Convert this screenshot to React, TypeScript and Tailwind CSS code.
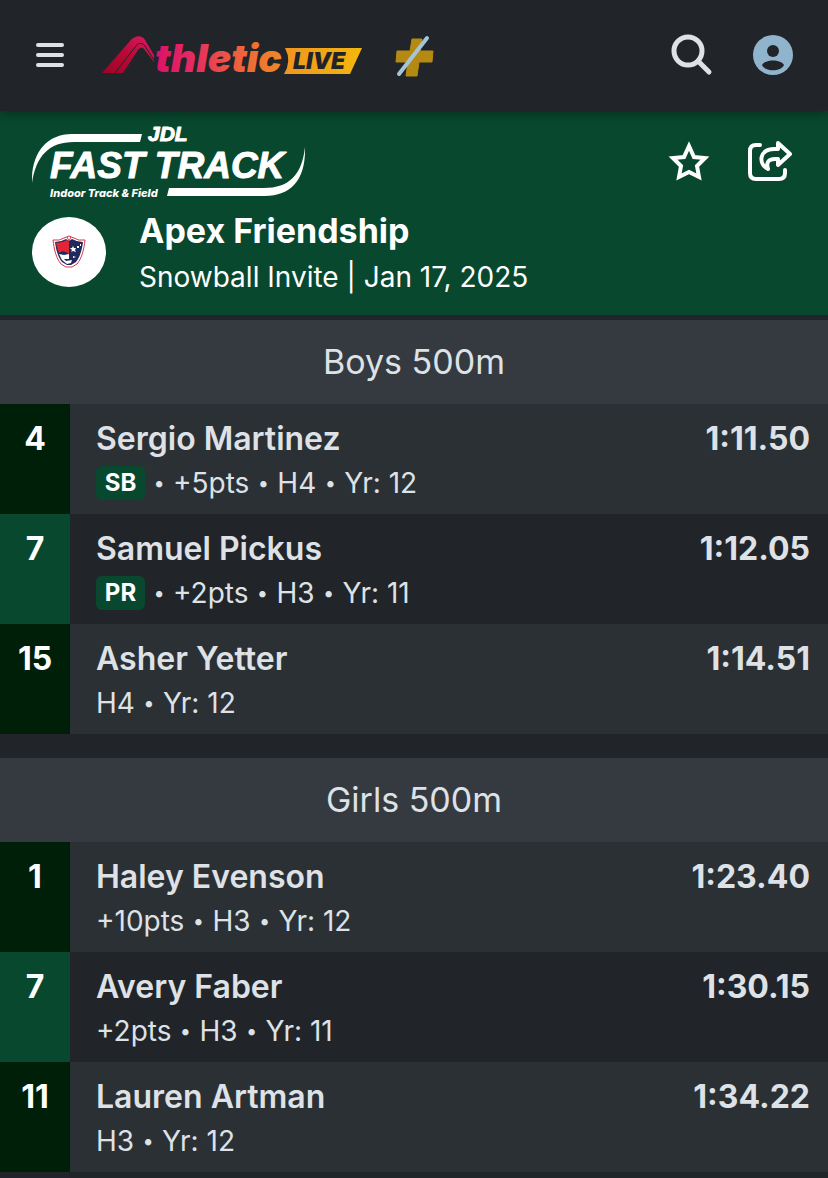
import React from "react";

type Result = {
  place: number;
  name: string;
  time: string;
  badge?: string;
  details: string[];
};

type Event = {
  title: string;
  results: Result[];
};

const events: Event[] = [
  {
    title: "Boys 500m",
    results: [
      { place: 4, name: "Sergio Martinez", time: "1:11.50", badge: "SB", details: ["+5pts", "H4", "Yr: 12"] },
      { place: 7, name: "Samuel Pickus", time: "1:12.05", badge: "PR", details: ["+2pts", "H3", "Yr: 11"] },
      { place: 15, name: "Asher Yetter", time: "1:14.51", details: ["H4", "Yr: 12"] },
    ],
  },
  {
    title: "Girls 500m",
    results: [
      { place: 1, name: "Haley Evenson", time: "1:23.40", details: ["+10pts", "H3", "Yr: 12"] },
      { place: 7, name: "Avery Faber", time: "1:30.15", details: ["+2pts", "H3", "Yr: 11"] },
      { place: 11, name: "Lauren Artman", time: "1:34.22", details: ["H3", "Yr: 12"] },
    ],
  },
];

const AthleticLiveLogo = () => (
  <svg width="262" height="52" viewBox="0 -5 262 52" role="img" aria-label="AthleticLIVE">
    <defs>
      <linearGradient id="swoosh" x1="0" x2="1" y1="1" y2="0">
        <stop offset="0" stopColor="#9c0426" />
        <stop offset="0.5" stopColor="#b90a35" />
        <stop offset="1" stopColor="#df1b66" />
      </linearGradient>
      <linearGradient id="word" gradientUnits="userSpaceOnUse" x1="54" x2="182" y1="0" y2="0">
        <stop offset="0" stopColor="#db1268" />
        <stop offset="0.3" stopColor="#e62c60" />
        <stop offset="0.6" stopColor="#ee5b3f" />
        <stop offset="1" stopColor="#f08b24" />
      </linearGradient>
      <linearGradient id="live" x1="0" x2="1" y1="0" y2="0">
        <stop offset="0" stopColor="#f0951f" />
        <stop offset="1" stopColor="#f4b70d" />
      </linearGradient>
    </defs>
    <path
      d="M0 39 L28 7 C33 1 40 1 43 6 L52 21 V28 L42 15 Q39 12 36 16 L21 39 Z"
      fill="url(#swoosh)"
    />
    <path d="M13 39 L34 12 C37 8 41 9 43 12 L52 26" fill="none" stroke="#212529" strokeWidth="1" />
    <text
      x="53"
      y="38"
      fontFamily="Inter, sans-serif"
      fontSize="39"
      fontWeight="900"
      fontStyle="italic"
      fill="url(#word)"
    >
      thletic
    </text>
    <path d="M183 14 H260 L248 40 H182 Q190 27 183 14 Z" fill="url(#live)" />
    <text
      x="191"
      y="35"
      fontFamily="Inter, sans-serif"
      fontSize="23"
      fontWeight="900"
      fontStyle="italic"
      fill="#212529"
    >
      LIVE
    </text>
  </svg>
);

const PlusLogo = () => (
  <svg width="40" height="44" viewBox="0 -1 40 44" role="img" aria-label="Plus disabled">
    <path
      d="M17 5 H27 L25 17 H38 L37 28 H24 L22 42 H11 L13 28 H1 L2 17 H15 Z"
      fill="#b58a13"
      stroke="#b58a13"
      strokeLinejoin="round"
    />
    <path d="M4 40 L32 4" stroke="#a5c4d8" strokeWidth="4" strokeLinecap="round" />
  </svg>
);

const TrackLogo = () => (
  <svg width="276" height="84" viewBox="0 -6 276 84" role="img" aria-label="JDL Fast Track">
    <g fill="#fff">
      <path d="M0 57 C-1 28 14 8 40 8 H110 L108 16 H42 C17 16 4 30 0 57 Z" />
      <path d="M273 21 C274 54 259 70 233 70 H135 L137 62 H232 C257 62 270 49 273 21 Z" />
    </g>
    <g
      fill="#fff"
      stroke="#fff"
      strokeLinejoin="round"
      fontFamily="'Liberation Sans', sans-serif"
      fontStyle="italic"
      fontWeight="700"
    >
      <text x="116" y="15" fontSize="21" strokeWidth="1">JDL</text>
      <text x="18" y="52" fontSize="37" strokeWidth="1">FAST TRACK</text>
    </g>
    <text
      x="18"
      y="71"
      fill="#fff"
      fontFamily="Inter, sans-serif"
      fontStyle="italic"
      fontSize="11"
      fontWeight="800"
    >
      Indoor Track &amp; Field
    </text>
  </svg>
);

const TeamCrest = () => (
  <div className="mt-[9px] flex h-[70px] w-[74px] shrink-0 items-center justify-center rounded-[50%] bg-white">
    <svg width="34" height="34" viewBox="0 0 34 34" role="img" aria-label="Team crest">
      <path
        d="M1 5 Q8 6 12 3 L17 1 L22 3 Q26 6 33 5 C32 14 30 23 25 29 L20 32 H14 L9 29 C4 23 2 14 1 5 Z"
        fill="#fff"
        stroke="#d9384c"
      />
      <path
        d="M3 7 Q9 7 14 4 L17 6 L20 4 Q25 7 31 7 C30 15 28 22 24 27 L19 30 H15 L10 27 C6 22 4 15 3 7 Z"
        fill="#1f2b5c"
      />
      <path d="M4 8 Q10 8 15 5 L17 7 V19 Q11 14 7 18 Q5 13 4 8 Z" fill="#e32636" />
      <path d="M7 19 L12 20 L17 19 V24 H12 L14 26 L20 25 L19 28 L15 29 L10 25 Z" fill="#fff" />
      <path d="M21 11 L22 13 L24 13 L23 15 L24 17 L21 16 L19 17 L20 15 L18 13 L20 13 Z" fill="#fff" />
      <path d="M25 11 h2 v2 h-2 Z M28 9 h1 v2 h-1 Z M21 21 l3 1 l-3 1 Z" fill="#fff" />
      <path d="M15 2 L17 6 L19 2" fill="none" stroke="#d9384c" />
    </svg>
  </div>
);

const Navbar = () => (
  <nav className="relative z-10 flex h-[111px] items-center justify-between bg-[#212529] pr-[35px] pb-[2px] pl-9 shadow-[0_2px_10px_rgba(0,0,0,0.4)]">
    <div className="flex items-center">
      <button type="button" aria-label="Open menu" className="flex w-7 flex-col gap-[6px]">
        <span className="h-1 w-full rounded-full bg-[#dee2e6]" />
        <span className="h-1 w-full rounded-full bg-[#dee2e6]" />
        <span className="h-1 w-full rounded-full bg-[#dee2e6]" />
      </button>
      <a href="#" className="ml-[38px] flex items-center gap-[31px]">
        <AthleticLiveLogo />
        <PlusLogo />
      </a>
    </div>
    <div className="flex items-center gap-10">
      <button type="button" aria-label="Search">
        <svg width="42" height="42" viewBox="0 0 42 42" fill="none" stroke="#dee2e6">
          <circle cx="17" cy="17" r="14" strokeWidth="5" />
          <path d="M27 27 L38 38" strokeWidth="5" strokeLinecap="round" />
        </svg>
      </button>
      <button type="button" aria-label="Account">
        <svg width="40" height="40" viewBox="0 0 40 40">
          <circle cx="20" cy="20" r="20" fill="#91b4cd" />
          <circle cx="20" cy="16" r="6" fill="#212529" />
          <path d="M9 30 C12 24 28 24 31 30 C28 37 12 37 9 30 Z" fill="#212529" />
        </svg>
      </button>
    </div>
  </nav>
);

const MeetHeader = () => (
  <header className="border-b-[5px] border-[#212529] bg-[#08482f] px-8 pt-[9px] pb-[15px] text-white">
    <div className="flex items-center justify-between">
      <a href="#">
        <TrackLogo />
      </a>
      <div className="flex items-center gap-9">
        <button type="button" aria-label="Add to favorites">
          <svg width="44" height="44" viewBox="0 0 44 44" fill="none" stroke="#fff" strokeWidth="4">
            <path d="M21 6 L26 17 L37 18 L29 26 L31 37 L21 32 L11 37 L13 26 L5 18 L16 17 Z" />
          </svg>
        </button>
        <button type="button" aria-label="Share">
          <svg
            width="48"
            height="44"
            viewBox="0 0 48 44"
            fill="none"
            stroke="#fff"
            strokeWidth="4"
            strokeLinecap="round"
            strokeLinejoin="round"
          >
            <path d="M12 5 H8 Q2 5 2 11 V33 Q2 39 8 39 H31 Q37 39 37 33 V30" />
            <path d="M30 3 L42 14 L30 25 V19 H27 C20 19 18 23 20 29 C10 24 11 9 26 9 H30 Z" />
          </svg>
        </button>
      </div>
    </div>
    <div className="mt-1 flex items-start gap-[33px]">
      <TeamCrest />
      <div>
        <h1 className="text-[34px] leading-[46px] font-bold">Apex Friendship</h1>
        <p className="text-[28px] leading-[46px]">Snowball Invite | Jan 17, 2025</p>
      </div>
    </div>
  </header>
);

const ResultRow = ({ result }: { result: Result }) => (
  <li className="group flex min-h-[110px] odd:bg-[#2b3035] even:bg-[#212529]">
    <div className="w-[70px] shrink-0 pt-[15px] text-center text-[32px] leading-10 font-bold text-white group-odd:bg-[#001f08] group-even:bg-[#08482f]">
      {result.place}
    </div>
    <div className="flex-1 pt-[15px] pl-[26px]">
      <div className="flex justify-between pr-[18px] text-[32px] leading-10 font-semibold">
        <a href="#">{result.name}</a>
        <span className="font-bold">{result.time}</span>
      </div>
      <div className="flex h-12 items-center gap-2 text-[28px]">
        {result.badge && (
          <span className="flex h-[34px] w-[49px] items-center justify-center rounded-md bg-[#08482f] text-2xl font-bold text-white">
            {result.badge}
          </span>
        )}
        {result.details.map((detail, i) => (
          <React.Fragment key={detail}>
            {(i > 0 || result.badge) && <span className="w-3 text-center text-xl">•</span>}
            <span>{detail}</span>
          </React.Fragment>
        ))}
      </div>
    </div>
  </li>
);

const App = () => {
  return (
    <div className="min-h-screen bg-[#212529] font-['Inter',sans-serif] text-[#dee2e6]">
      <Navbar />
      <MeetHeader />
      <main className="flex flex-col gap-6">
        {events.map((event) => (
          <section key={event.title}>
            <h2 className="bg-[#343a40] text-center text-[34px] leading-[84px]">{event.title}</h2>
            <ul>
              {event.results.map((result) => (
                <ResultRow key={result.name} result={result} />
              ))}
            </ul>
          </section>
        ))}
      </main>
    </div>
  );
};

export default App;
